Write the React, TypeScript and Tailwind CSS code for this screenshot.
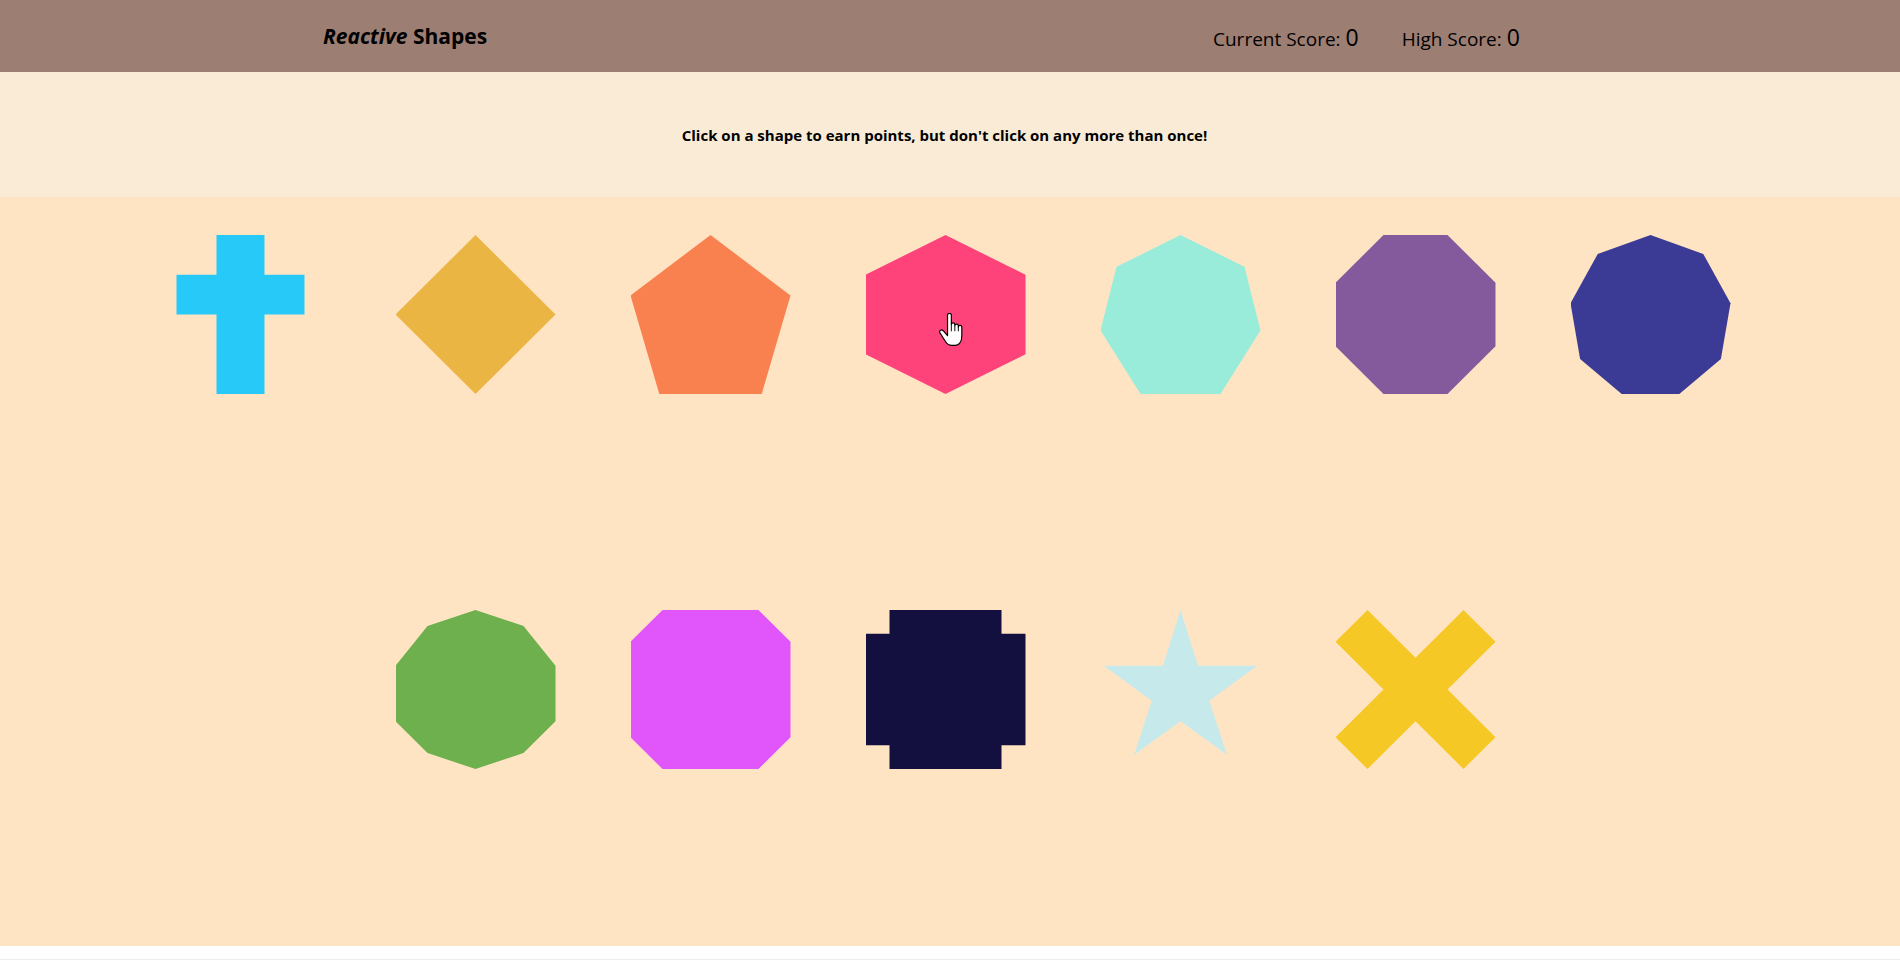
import React from "react";

type Shape = { name: string; color: string; clip: string };

const shapes: Shape[] = [
  {
    name: "cross",
    color: "#26c9f7",
    clip: "polygon(10% 25%, 35% 25%, 35% 0%, 65% 0%, 65% 25%, 90% 25%, 90% 50%, 65% 50%, 65% 100%, 35% 100%, 35% 50%, 10% 50%)",
  },
  { name: "rhombus", color: "#ebb543", clip: "polygon(50% 0%, 100% 50%, 50% 100%, 0% 50%)" },
  { name: "pentagon", color: "#f98150", clip: "polygon(50% 0%, 100% 38%, 82% 100%, 18% 100%, 0% 38%)" },
  { name: "hexagon", color: "#fe437a", clip: "polygon(50% 0%, 100% 25%, 100% 75%, 50% 100%, 0% 75%, 0% 25%)" },
  {
    name: "heptagon",
    color: "#9aecda",
    clip: "polygon(50% 0%, 90% 20%, 100% 60%, 75% 100%, 25% 100%, 0% 60%, 10% 20%)",
  },
  {
    name: "octagon",
    color: "#845a9d",
    clip: "polygon(30% 0%, 70% 0%, 100% 30%, 100% 70%, 70% 100%, 30% 100%, 0% 70%, 0% 30%)",
  },
  {
    name: "nonagon",
    color: "#3b3b96",
    clip: "polygon(50% 0%, 83% 12%, 100% 43%, 94% 78%, 68% 100%, 32% 100%, 6% 78%, 0% 43%, 17% 12%)",
  },
  {
    name: "decagon",
    color: "#6db04d",
    clip: "polygon(50% 0%, 80% 10%, 100% 35%, 100% 70%, 80% 90%, 50% 100%, 20% 90%, 0% 70%, 0% 35%, 20% 10%)",
  },
  {
    name: "bevel",
    color: "#e056fb",
    clip: "polygon(20% 0%, 80% 0%, 100% 20%, 100% 80%, 80% 100%, 20% 100%, 0% 80%, 0% 20%)",
  },
  {
    name: "notched",
    color: "#13103f",
    clip: "polygon(15% 0%, 85% 0%, 85% 15%, 100% 15%, 100% 85%, 85% 85%, 85% 100%, 15% 100%, 15% 85%, 0% 85%, 0% 15%, 15% 15%)",
  },
  {
    name: "star",
    color: "#c6eaeb",
    clip: "polygon(50% 0%, 61% 35%, 98% 35%, 68% 57%, 79% 91%, 50% 70%, 21% 91%, 32% 57%, 2% 35%, 39% 35%)",
  },
  {
    name: "close",
    color: "#f6c826",
    clip: "polygon(20% 0%, 0% 20%, 30% 50%, 0% 80%, 20% 100%, 50% 70%, 80% 100%, 100% 80%, 70% 50%, 100% 20%, 80% 0%, 50% 30%)",
  },
];

function HandCursor() {
  return (
    <svg
      className="absolute left-[938px] top-[313px] pointer-events-none"
      width="27"
      height="35"
      viewBox="0 0 17 22"
    >
      <path
        d="M6 1.4C6 .7 6.5.2 7.2.2 7.9.2 8.4.7 8.4 1.4L8.4 7.2C8.4 6.6 8.9 6.2 9.5 6.2 10.1 6.2 10.6 6.6 10.6 7.2L10.6 8C10.6 7.4 11.1 7 11.7 7 12.3 7 12.8 7.4 12.8 8L12.8 8.8C12.8 8.2 13.3 7.8 13.9 7.8 14.5 7.8 15 8.2 15 8.8L15 14.2C15 17.6 13.6 20.4 10.6 20.4L8.6 20.4C6.6 20.4 5.6 19.4 4.6 17.8L1.3 12.6C.8 11.9 1 11.1 1.6 10.8 2.2 10.5 2.9 10.7 3.4 11.3L6 14.2Z"
        fill="#ffffff"
        stroke="#000000"
        strokeWidth="0.75"
        strokeLinejoin="round"
      />
      <path d="M8.4 7.2V11.5M10.6 8V11.5M12.8 8.8V11.5" stroke="#000000" strokeWidth="0.6" fill="none" />
    </svg>
  );
}

export default function App() {
  return (
    <div
      className="relative w-[1900px] h-[960px] bg-white overflow-hidden"
      style={{ fontFamily: '"Open Sans", "Noto Sans", Arial, sans-serif' }}
    >
      <header className="h-[72px] bg-[#9c7e73] flex items-center text-black">
        <div className="w-[1213px] pl-[323px]">
          <h1 className="text-[21px] font-bold leading-none">
            <em>Reactive</em> Shapes
          </h1>
        </div>
        <div className="flex items-baseline gap-[43px] text-[19px] leading-none pt-[3px]">
          <span>
            Current Score: <span className="text-[23px]">0</span>
          </span>
          <span>
            High Score: <span className="text-[23px]">0</span>
          </span>
        </div>
      </header>

      <section className="h-[125px] bg-[#faebd7] flex items-center">
        <p className="w-[1889px] text-center text-[15px] font-bold text-black pt-[2px]">
          Click on a shape to earn points, but don't click on any more than once!
        </p>
      </section>

      <main className="h-[749px] bg-[#ffe4c4] pt-[38px]">
        <div className="ml-[125px] w-[1641px] flex flex-wrap justify-center gap-x-[75px] gap-y-[216px]">
          {shapes.map((s) => (
            <button
              key={s.name}
              aria-label={s.name}
              className="w-[160px] h-[159px] shrink-0 cursor-pointer"
              style={{ backgroundColor: s.color, clipPath: s.clip }}
            />
          ))}
        </div>
      </main>

      <div className="h-[13px] bg-white" />
      <div className="h-px bg-[#ececec]" />

      <HandCursor />
    </div>
  );
}
